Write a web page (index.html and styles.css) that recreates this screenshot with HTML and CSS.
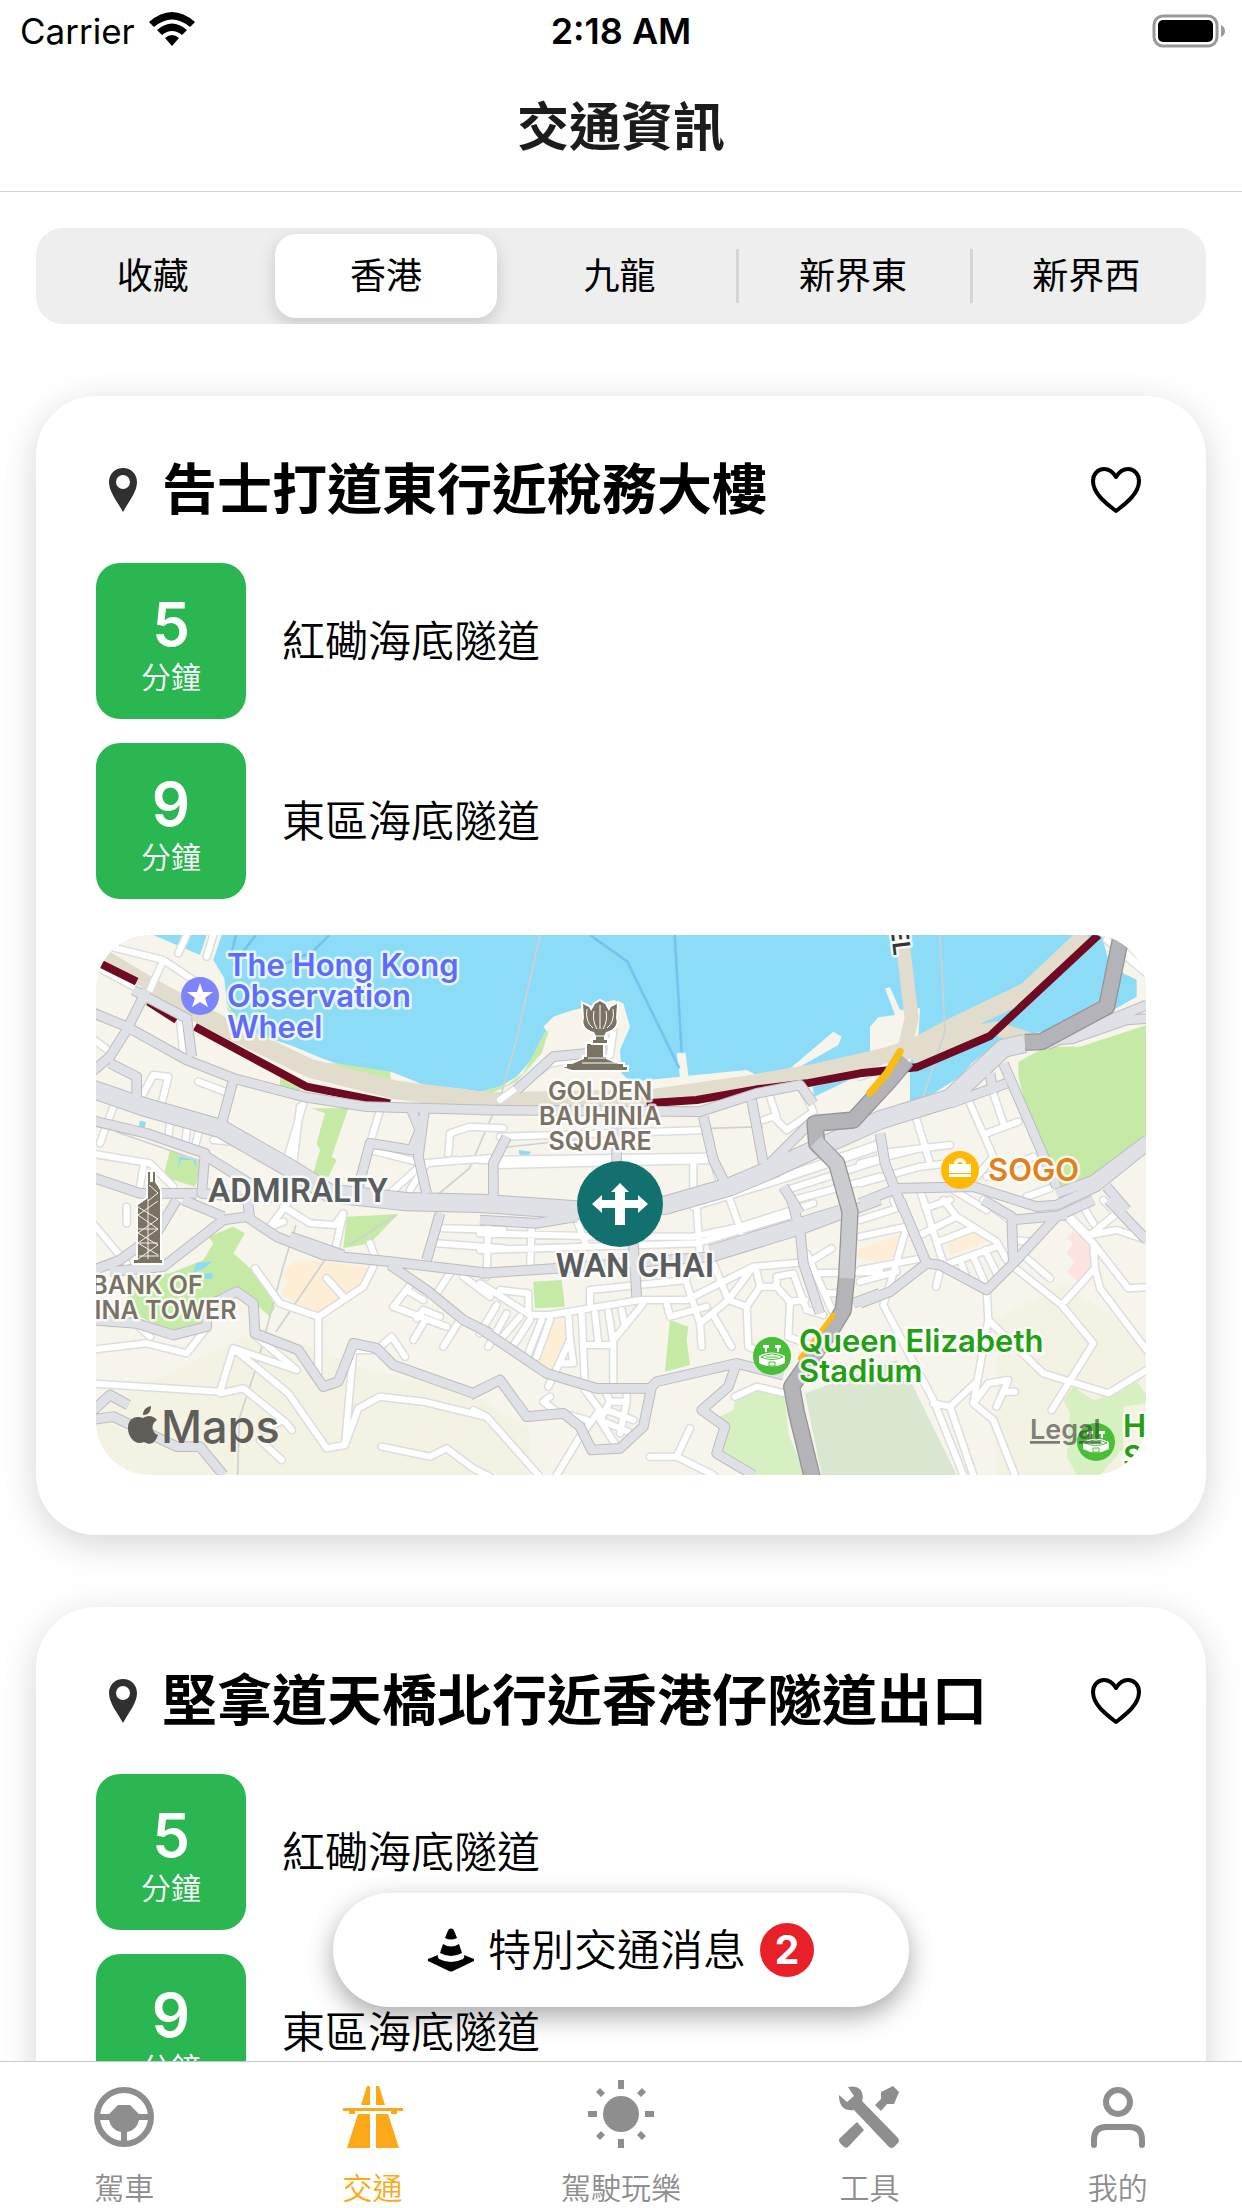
FILE: index.html
```html
<!DOCTYPE html>
<html lang="zh-Hant-HK">
<head>
    <meta charset="utf-8">
    <title>交通資訊</title>
    <meta name="viewport" content="width=device-width, initial-scale=1">
    <link rel="stylesheet" href="styles.css">
</head>
<body>

<header>
    <div class="status">
        <span class="carrier">Carrier
            <svg width="46" height="34" viewBox="0 0 46 34">
                <path d="M23 34l-7-8q7-6 14 0z"/>
                <path d="M8 18q15-13 30 0l-5 5q-10-8-20 0z"/>
                <path d="M0 10q23-20 46 0l-5 5q-18-15-36 0z"/>
            </svg>
        </span>
        <span class="time">2:18 AM</span>
        <span class="battery">
            <svg width="74" height="34" viewBox="0 0 74 34">
                <rect x="2" y="2" width="63" height="30" rx="9" fill="none" stroke="#999" stroke-width="3"/>
                <rect x="6" y="6" width="55" height="22" rx="5"/>
                <path d="M69 11q4 2 4 6t-4 6z" fill="#999"/>
            </svg>
        </span>
    </div>
    <h1>交通資訊</h1>
</header>

<main>
    <fieldset class="segments">
        <label><input type="radio" name="area"><span>收藏</span></label>
        <label><input type="radio" name="area" checked><span>香港</span></label>
        <label><input type="radio" name="area"><span>九龍</span></label>
        <label class="divided"><input type="radio" name="area"><span>新界東</span></label>
        <label class="divided"><input type="radio" name="area"><span>新界西</span></label>
    </fieldset>

    <section class="card">
        <div class="card-head">
            <svg class="pin" width="28" height="44" viewBox="0 0 28 44">
                <path fill-rule="evenodd" d="M14 0C6 0 0 6 0 14c0 10 8 19 14 30 6-11 14-20 14-30C28 6 22 0 14 0zm0 7a7 7 0 1 1 0 14 7 7 0 0 1 0-14z"/>
            </svg>
            <h2>告士打道東行近稅務大樓</h2>
            <button class="heart" aria-label="收藏">
                <svg width="52" height="48" viewBox="0 0 52 48">
                    <path d="M26 45C17 38 3 28 3 15 3 8 8 3 14 3c5 0 9 3 12 8 3-5 7-8 12-8 6 0 11 5 11 12 0 13-14 23-23 30z"/>
                </svg>
            </button>
        </div>
        <ul class="routes">
            <li><div class="minutes"><b>5</b><small>分鐘</small></div><span>紅磡海底隧道</span></li>
            <li><div class="minutes"><b>9</b><small>分鐘</small></div><span>東區海底隧道</span></li>
        </ul>
        <svg class="map" viewBox="0 0 1050 540" preserveAspectRatio="xMidYMid slice">
            <defs>
                <!-- white side streets -->
                <g id="streets">
                    <path transform="translate(-18 -15)" d="M20 110L150 180M60 50L220 90L340 170M220 90L180 180M0 320L60 365M270 270L280 370M155 500L190 435L235 440L215 520M325 455L405 485M70 530L30 640M240 580L235 620M290 600L285 645M325 610L315 650M640 520L590 690M630 530L610 700M370 630L480 640M0 670L180 700L250 770M160 710L150 770M870 540L840 640M840 660L1000 700L1200 685M1075 670L1080 610L1140 590L1240 595M900 790L1000 700M960 780L1010 700L1100 690M290 15L265 70M370 15L350 80"/>
                    <path transform="translate(1152 -15)" d="M60 620L680 600M0 690L690 680M60 705L700 690L720 760M640 690V780M850 570L880 560L920 600L1000 545L960 460M870 500L890 560M60 510L210 400L390 375L400 300M640 830L900 750L1200 650M910 740L1200 640M920 780L1200 690M940 810L1200 740"/>
                    <path transform="translate(2292 -15)" d="M170 570L210 700M60 670L270 645M0 700L200 650M0 760L180 710L270 700M330 520L400 680L350 740M400 490L430 580M380 610L475 575M500 800L570 775M280 780L380 840M180 780L200 840M210 830L270 810M380 740L520 680M0 440L80 410M740 30L860 130M790 60L830 100"/>
                    <path transform="translate(-18 795)" d="M110 20V70M0 60L110 190M600 0L540 80L580 65M580 20L660 70L735 75L760 40L735 150M840 130L860 185M1060 85L1240 90M1040 130L1240 145M850 200L820 260L685 350L570 310L495 205M685 350V520M710 235L760 290M0 450L170 430L290 460L345 390M130 365L180 410M0 550L390 575L430 445L595 580L710 745L765 735L790 450L860 450L905 410L945 470M390 580L460 565L590 670L605 690M430 445L620 510L500 410M765 735L805 625L870 590L1000 605L1185 650M875 740L1020 770L1070 745L1150 805L1200 830M510 720L575 780M570 665L520 690M965 250L910 320L1070 380M1000 330L980 355M1000 370L970 420M1110 360L1060 440M1080 220L1040 280M1120 230L1200 290M1000 330L1050 350M950 270L1000 300"/>
                    <path transform="translate(1152 795)" d="M0 100L400 110L640 110L780 80L1000 10M0 150L650 130L950 40M25 60L20 230M155 75L150 210M290 60L320 140M650 20L660 170M750 0L800 140M0 250L150 345L210 345L480 300L620 300L820 200L990 185L1055 145M60 270L145 280V340M330 310V270L620 240M700 190L745 300L820 200M620 250L660 370L665 440M560 310L570 350L680 320M745 300L800 320L805 440L830 450M745 300L660 370M700 345L755 440M830 215L840 260L890 260V230L940 220L980 330L1030 345M840 260L800 320M890 260L930 305L925 410L980 430M930 305L975 300M980 160L1060 340M1010 220L1200 215M1035 280H1080M50 315L0 400M80 340L25 440M120 350L60 420M150 360L95 445M185 360L145 460M210 360L170 470M265 340L270 420L205 560M305 340L315 560M345 340L355 430M385 335L400 430V555M425 330L435 380M490 310L400 420M315 435H400M270 420L280 490L240 490M210 590L190 605L230 635L320 660M315 570L360 630L315 690M375 570L390 605L360 660L410 740M390 605H440V570M380 630L460 660M360 660L445 695M440 605L420 700M-20 630L20 650L175 825M300 710L230 825M510 770H590L700 825M590 770L630 685M765 590L830 560L915 580"/>
                    <path transform="translate(2292 795)" d="M0 60L110 25L100 0M0 110L140 80L100 220L70 315L220 600L310 825M0 210L185 175M0 245L110 215M190 0L250 190M180 105L290 50L250 0M290 50L410 125L440 180M235 125L340 85M240 200L410 140M240 210L228 260M300 180L320 235M340 170L380 260M375 150L415 230M380 270L385 360L340 610L400 660L465 825M220 610L270 620L345 550M270 620L340 825M340 610L385 550L445 540L410 620M435 575H465M460 200L605 315L700 430L625 550M385 360L550 520L745 580L860 510M625 550L575 630M605 315L705 205L700 130L620 50M705 205L720 265L860 450M700 130L805 265L860 262M690 105L770 90L860 120M690 105L770 40L730 0M670 20L700 70M600 20L690 110M460 120L510 125M495 170L570 235M370 0L450 60"/>
                </g>
                <!-- grey through roads -->
                <g id="roads">
                    <path transform="translate(-18 -15)" d="M0 245L110 290L290 390L430 445L640 500L830 530L1200 540M170 180L110 300L60 380L0 430M290 260L305 380M430 450L395 580M0 570L170 610L345 670L335 790L450 800M960 530L990 600L965 660L840 640L800 790M60 400L140 440V500M1005 530L985 680L1010 790M0 740L150 790L320 790M350 680L560 810M130 180L300 270"/>
                    <path transform="translate(1152 -15)" d="M0 540L660 545L830 490L960 465L1000 520M80 620L40 700V800L0 830M670 560L700 690L750 790M815 510L850 700M870 700L1000 570M910 770L960 850M110 480L220 380L380 365M410 560V700"/>
                    <path transform="translate(2292 -15)" d="M60 610L75 700L130 840M390 430L400 490M430 400L500 560L590 770M270 520L440 460M0 820L110 775L340 770L530 830L590 825L710 770L860 650M590 790L700 750L860 630M740 770L800 840M495 340L640 325L800 270L870 265M560 345L860 225"/>
                    <path transform="translate(-18 795)" d="M0 215L90 180L200 100L260 0M60 215L220 200L400 60L470 50L560 110L700 165L900 185L1200 220M470 -20L480 60M600 110L760 165M900 195L1010 270L1120 360L1200 400M0 360L140 370L250 405L350 380V320L440 275L490 310L495 400L625 450L700 560L745 545L790 430L860 445L910 495L1150 580L1200 555M0 660L70 650L260 740L330 740L400 825M0 640L60 585L115 615M1050 40L1010 180M280 0L400 50"/>
                    <path transform="translate(1152 795)" d="M0 60L170 70L290 50M0 220L230 205L700 170L960 90L1200 0M690 150L1080 30M0 385L200 520L350 565H510L530 545L770 490L910 525M-30 585L60 540L140 650L250 640L300 680L335 750L420 745L490 680L515 560M770 490L745 560L665 630L735 680L710 760L820 825M935 0L960 90L970 190L1020 340M460 130L470 290M1120 310L1200 280"/>
                    <path transform="translate(2292 795)" d="M0 310L90 275L200 190L240 195L380 270L460 190L590 50L700 0M120 0L200 190M460 190L455 50L370 0M455 60L620 45M745 0L860 120"/>
                </g>
                <g id="avenues">
                    <path d="M-18 460L142 515L372 580L582 700L702 775L932 800L1152 805L1440 825L1710 810L1902 755L2022 705L2152 645L2352 555L2562 490L2722 340L2787 325"/>
                </g>
                <g id="expressway">
                    <path d="M3077 -5L3032 215L2837 320L2787 322"/>
                    <path d="M2432 375L2382 435L2272 555L2157 565L2162 625L2222 685L2262 830L2252 1025L2242 1125L2212 1175L2087 1355L2102 1435L2152 1640"/>
                </g>
                <g id="stadium">
                    <circle r="19" fill="#49bf38"/>
                    <path d="M-13 0v7q13 7 26 0V0q-13-7-26 0zM-9-11h6v3h-2v4h-2v-4h-2zM3-11h6v3H7v4H5v-4H3z" fill="#fff"/>
                    <path d="M-11 1q11-6 22 0q-11 5-22 0zM-6 1H6M-3 10V6h6v4z" fill="none" stroke="#49bf38"/>
                </g>
            </defs>

            <rect width="1050" height="540" fill="#f7f4eb"/>
            <g transform="scale(.33333)">
                <path class="hill" d="M500 1180L800 1300L1132 1380L1300 1480L1300 1620H0V1420zM2700 1150L2900 1050L3150 1200V1620H2700z"/>
                <path class="water" d="M377 0L352 75L385 130L392 205L425 260L490 300L582 330L677 370L735 390L890 412L985 450L1105 462L1152 470L1212 455L1262 425L1332 345L1357 295L1342 275L1372 245L1422 228L1552 195L1582 205L1602 275L1572 345L1577 415L1602 440L1752 425L1742 355L1769 353L1777 422L1952 405L1982 420L2077 405L2212 290L2237 305L2227 330L2112 395L2322 360V275L2347 247L2397 240L2367 160L2382 157L2412 225L2472 220L2467 315L2442 385V500L2482 495L2592 425L2627 385L2722 310L2842 290L3012 195L3052 225L3122 185V135L3082 115L3037 75L3017 0zM172 0L312 60L332 0zM2150 455L2270 430L2155 485zM132 557L150 562L145 580L128 575zM675 575L687 580L675 630L667 628zM1268 645L1305 650L1295 665L1270 658z"/>
                <path class="ferry" d="M420 0L405 60M480 0L410 90M700 0L650 50L490 120M1482 0L1594 80L1750 400M1736 0L1757 350"/>
                <path class="park" d="M502 320L572 355L642 385L722 385L882 410L887 455L942 475L832 470L682 415L562 375L502 340zM552 425L622 455L602 475L552 450zM647 520H757L707 665L722 675L697 725L647 730L672 645L662 625L687 535zM222 645L322 685L297 755L202 725zM387 210L412 235L482 305L422 275zM1347 290H1357L1337 355L1262 440L1152 490V470L1232 450L1282 415zM2767 380L2852 335H2952L3152 270V610L2992 730L2892 755L2832 675L2767 425z"/>
                <path class="park" d="M412 875L447 895L412 955L502 1035L537 1115L522 1145L432 1065L332 1125L327 1175L232 1195L132 1145L92 1095L112 1025L222 1015L322 975L352 925L337 905zM752 845L907 837L822 925L742 940zM1312 1040L1397 1035L1407 1115L1317 1120zM1722 1155L1777 1175L1772 1215L1782 1290L1707 1310z"/>
                <path class="park light" d="M1982 1365L2067 1380L2077 1495L2127 1620H1972L1872 1545L1897 1475L1872 1445L1912 1425L1917 1395zM2902 1395L2932 1355L2992 1395L3052 1380L3122 1340L3152 1380V1405L3082 1415V1540L3012 1620H2942L2912 1565L2922 1435z"/>
                <path class="cemetery" d="M2127 1375L2402 1275L2452 1355L2582 1620H2177z"/>
                <path class="sand" d="M602 975L692 980L817 1000L792 1055L672 1140L557 1080L572 1035L557 1015zM1367 1155L1392 1150L1412 1205L1367 1300L1327 1280L1352 1235zM2292 940L2412 900L2392 965L2342 982L2280 965zM2552 925L2632 890L2692 915L2562 960z"/>
                <path class="hospital" d="M2932 890L2987 925L2989 990L2947 1040L2912 1010L2937 980L2912 955L2932 925L2912 910z"/>
                <path class="water" d="M300 985L350 978L325 1000L290 1015zM325 1015H350V1032H325zM250 665L300 675L302 700L290 675L255 675L245 700z"/>

                <path class="tan" d="M12 65L162 155L402 285L642 400L900 465L1180 500L1672 490L1952 450L2152 415L2352 370L2452 340L2562 280L2792 170L2972 0"/>
                <path class="tan thin" d="M2417 0L2447 250L2422 355M2450 375L2650 290L2700 280L2820 320"/>
                <path class="rail" d="M1332 0L1260 320L1215 480L1120 700L1000 800M2532 0L2547 290L2480 490M60 590L320 680M600 870L560 1000L480 1300L430 1450L425 1620M690 970L540 1190M900 840L760 930M1200 640L1700 585L2000 575"/>
                <use href="#streets" class="casing street"/>
                <use href="#streets" class="fill street"/>
                <path class="congested" d="M12 85L122 140M157 200L242 255M297 275L472 370L632 455L782 485L882 505M1652 505L1802 495L1982 463L2132 445L2292 415L2462 397L2682 303L3007 0"/>
                <use href="#roads" class="casing road"/>
                <use href="#avenues" class="casing avenue"/>
                <use href="#roads" class="fill road"/>
                <use href="#avenues" class="fill avenue"/>
                <use href="#expressway" class="casing express"/>
                <use href="#expressway" class="fill express"/>
                <path class="express-light" d="M2160 620L2222 685L2262 830L2252 1030"/>
                <path class="slow" d="M2412 350L2372 415L2322 473"/>
                <path class="slow narrow" d="M2212 1140L2112 1270"/>
            </g>

            <!-- places -->
            <circle cx="104" cy="61" r="19" fill="#7d85fb"/>
            <path fill="#fff" d="M104 48l3 9h10l-8 6 3 9-8-5-8 5 3-9-8-6h10z"/>
            <text class="place violet"><tspan x="131" y="41">The Hong Kong</tspan><tspan x="131" y="72">Observation</tspan><tspan x="131" y="103">Wheel</tspan></text>

            <g class="landmark">
                <path d="M476 135h55v-3h-4v-3h-5l-12-5v-2h-3v-13h-16v13h-3v2l-12 5h-5v3h-4z"/>
                <path d="M497 108h14v-3h-3v-4l2-4c9-2 12-8 10-14l1-14-6 3-2 4-4-7-5-3-5 3-4 7-2-4-6-3 1 14c-2 6 1 12 10 14l2 4v4h-3z"/>
            </g>
            <path d="M504 70v24M498 76q-2 10 3 18M510 76q2 10-3 18M491 74q-2 13 6 19M517 74q2 13-6 19M498 101h12M492 123h20M486 128h34" fill="none" stroke="#fff"/>
            <text class="landmark-name"><tspan x="504" y="165">GOLDEN</tspan><tspan x="504" y="190">BAUHINIA</tspan><tspan x="504" y="215">SQUARE</tspan></text>

            <path class="landmark" d="M38 328h28v-3h-2v-70l-5-8v-10h-2v10h-3v-10h-2v26l-10 7v55h-4z"/>
            <path d="M52 264v60M42 272l20 12-20 14 20 12-20 14M62 266l-20 14 20 14-20 14 20 12M42 294h20M42 308h20M53 250l9 8-10 8M43 321h20" fill="none" stroke="#f7f4eb"/>
            <text class="landmark-name"><tspan x="51" y="359">BANK OF</tspan><tspan x="51" y="384">CHINA TOWER</tspan></text>

            <text class="district" x="202" y="267">ADMIRALTY</text>
            <text class="district" x="539" y="342">WAN CHAI</text>

            <circle cx="864" cy="235" r="19" fill="#ffb900"/>
            <path fill="#fff" d="M853 229h5v-2q6-8 12 0v2h5v9h-22zM861 229h6q-3-5-6 0zM853 239h22v3h-22z"/>
            <text class="place orange" x="892" y="246">SOGO</text>

            <use href="#stadium" x="676" y="421"/>
            <text class="place green"><tspan x="703" y="417">Queen Elizabeth</tspan><tspan x="703" y="447">Stadium</tspan></text>
            <use href="#stadium" x="1000" y="507"/>
            <text class="place green"><tspan x="1027" y="502">H</tspan><tspan x="1027" y="533">S</tspan></text>

            <text class="tunnel" transform="translate(798 21) rotate(83)">TUNNEL</text>

            <circle cx="524" cy="269" r="43" fill="#12706f"/>
            <path fill="#fff" d="M524 248l9 9h-4v8h13v-5l10 9-10 9v-5h-13v17h-10v-17h-13v5l-10-9 10-9v5h13v-8h-4z"/>

            <g class="brand">
                <path d="M47 483c3-2 9-4 14 2-7 4-5 13 1 15-3 8-7 11-14 7-8 4-16-4-16-14 0-9 7-13 15-10zM47 480c0-5 3-8 8-9 0 6-3 9-8 9z"/>
                <text x="65" y="508">Maps</text>
            </g>
            <a href="#legal"><text class="legal" x="934" y="504">Legal</text></a>
        </svg>
    </section>

    <section class="card">
        <div class="card-head">
            <svg class="pin" width="28" height="44" viewBox="0 0 28 44">
                <path fill-rule="evenodd" d="M14 0C6 0 0 6 0 14c0 10 8 19 14 30 6-11 14-20 14-30C28 6 22 0 14 0zm0 7a7 7 0 1 1 0 14 7 7 0 0 1 0-14z"/>
            </svg>
            <h2>堅拿道天橋北行近香港仔隧道出口</h2>
            <button class="heart" aria-label="收藏">
                <svg width="52" height="48" viewBox="0 0 52 48">
                    <path d="M26 45C17 38 3 28 3 15 3 8 8 3 14 3c5 0 9 3 12 8 3-5 7-8 12-8 6 0 11 5 11 12 0 13-14 23-23 30z"/>
                </svg>
            </button>
        </div>
        <ul class="routes">
            <li><div class="minutes"><b>5</b><small>分鐘</small></div><span>紅磡海底隧道</span></li>
            <li><div class="minutes"><b>9</b><small>分鐘</small></div><span>東區海底隧道</span></li>
        </ul>
    </section>
</main>

<div class="bottom">
    <button class="news">
        <svg width="46" height="44" viewBox="0 0 46 44">
            <path d="M21 1q2-1 4 0 1 1 4 9-6 3-12 0 3-8 4-9zM15 16q8 5 16 0l3 9q-11 6-22 0zM10 27q-1 2 1 4 12 6 24 0 2-2 1-4l10 4v2L25 43q-2 1-4 0L0 33v-2z"/>
        </svg>
        <span class="news-title">特別交通消息</span>
        <span class="badge">2</span>
    </button>
    <nav>
        <a href="#drive">
            <svg viewBox="0 0 60 62">
                <circle cx="30" cy="31" r="27" fill="none" stroke="currentColor" stroke-width="6"/>
                <path d="M4 28h11l9-9h12l9 9h11v6H45q-2 10-12 12v12h-6V46q-10-2-12-12H4z"/>
            </svg>
            駕車
        </a>
        <a href="#traffic" class="current">
            <svg viewBox="0 0 60 62">
                <path d="M24 0h3v19h-9zM33 0h3l6 19h-9zM0 22h60v3h-6v3h-6v-3H12v3H6v-3H0zM15 28h12v34H4zM33 28h12l11 34H33z"/>
            </svg>
            交通
        </a>
        <a href="#fun">
            <svg class="tall" viewBox="0 0 66 68">
                <circle cx="33" cy="34" r="18"/>
                <path d="M30 0h6v9h-6zM30 59h6v9h-6zM0 31h9v6H0zM57 31h9v6h-9zM8 12l4-4 5 5-4 4zM49 13l5-5 4 4-5 5zM8 56l5-5 4 4-5 5zM49 55l4-4 5 5-4 4z"/>
            </svg>
            駕駛玩樂
        </a>
        <a href="#tools">
            <svg viewBox="0 0 60 62">
                <path d="M9 1q14-3 15 10l-1 4 36 37q2 3 0 5l-4 4q-2 2-5 0L15 24Q0 26 0 9l8 7 7-6zM42 6l12-6 6 6-5 12h-7l-6 7-6-6 6-6zM18 36l7 8-15 16q-2 3-5 1l-4-4q-2-3 0-5z"/>
            </svg>
            工具
        </a>
        <a href="#me">
            <svg viewBox="0 0 60 62">
                <g fill="none" stroke="currentColor" stroke-width="6" stroke-linecap="round">
                    <circle cx="30" cy="16" r="12"/>
                    <path d="M6 59V54Q6 41 18 41H42Q54 41 54 54V59"/>
                </g>
            </svg>
            我的
        </a>
    </nav>
</div>

</body>
</html>
```
FILE: styles.css
```css
* {
    box-sizing: border-box;
}
body {
    margin: 0;
    height: 100vh;
    display: flex;
    flex-direction: column;
    background: white;
    color: black;
    font-family: Inter, "Noto Sans CJK TC", sans-serif;
}
h1, h2, ul, fieldset {
    margin: 0;
    padding: 0;
    border: 0;
}
button {
    border: 0;
    background: none;
    font-family: inherit;
    color: inherit;
}

/* status bar and title */
header {
    height: 192px;
    flex: none;
    border-bottom: 1px solid #d4d4d4;
}
.status {
    display: grid;
    grid-template-columns: 1fr auto 1fr;
    align-items: center;
    height: 60px;
    padding: 2px 16px 0;
    font-size: 35px;
}
.carrier {
    display: flex;
    align-items: center;
    gap: 14px;
    padding-left: 4px;
}
.carrier svg {
    margin-top: -4px;
}
.time {
    font-size: 36px;
    font-weight: 600;
}
.battery {
    display: flex;
    justify-self: end;
}
h1 {
    line-height: 136px;
    font-size: 52px;
    font-weight: 700;
    text-align: center;
    color: #1c1c1e;
}

main {
    flex: 1;
    min-height: 0;
    overflow-y: auto;
    scrollbar-width: none;
    padding: 36px 36px 72px;
}

/* area switch */
.segments {
    display: grid;
    grid-template-columns: repeat(5, 1fr);
    height: 96px;
    padding-right: 3px;
    border-radius: 27px;
    background: #eee;
    overflow: hidden;
    font-size: 36px;
}
.segments label {
    position: relative;
    display: flex;
    padding: 6px;
}
.segments input {
    position: absolute;
    opacity: 0;
}
.segments span {
    flex: 1;
    border-radius: 21px;
    line-height: 84px;
    text-align: center;
}
.segments input:checked + span {
    background: white;
    box-shadow: 0 6px 18px rgba(0, 0, 0, 0.16);
}
.divided {
    background: linear-gradient(#d4d4d6, #d4d4d6) left center / 3px 54px no-repeat;
}

/* cards */
.card {
    margin-top: 72px;
    padding: 60px;
    border-radius: 60px;
    background: white;
    box-shadow: 0 9px 36px rgba(0, 0, 0, 0.17);
}
.card-head {
    display: flex;
    align-items: center;
    height: 67px;
    margin-bottom: 40px;
    padding: 0 4px 0 13px;
}
.pin {
    fill: #303030;
}
h2 {
    flex: 1;
    padding-left: 25px;
    line-height: 67px;
    font-size: 55px;
    font-weight: 700;
    white-space: nowrap;
}
.heart {
    padding: 0;
    line-height: 0;
}
.heart path {
    fill: none;
    stroke: black;
    stroke-width: 4;
    stroke-linejoin: round;
}
.routes {
    display: grid;
    gap: 24px;
    list-style: none;
}
.routes li {
    display: flex;
    align-items: center;
    gap: 36px;
    font-size: 43px;
    font-weight: 350;
}
.routes span, .news-title {
    padding-bottom: 7px;
}
.minutes {
    display: flex;
    flex-direction: column;
    align-items: center;
    width: 150px;
    height: 156px;
    padding-top: 30px;
    border-radius: 24px;
    background: #2ab651;
    color: white;
}
.minutes b {
    line-height: 62px;
    font-size: 60px;
    font-weight: 600;
}
.minutes small {
    line-height: 44px;
    font-size: 30px;
}

/* map */
.map {
    display: block;
    width: 100%;
    height: 540px;
    margin-top: 36px;
    border-radius: 54px;
}
.water    { fill: #8cdcf7; }
.park     { fill: #c5eaa5; }
.light    { fill: #d7f0c1; }
.cemetery { fill: #d9e6d0; }
.sand     { fill: #fdeed5; }
.hospital { fill: #fce3e0; }
.hill     { fill: #f4f2e3; }

.ferry, .tan, .rail, .congested, .slow, .express-light, .casing, .fill {
    fill: none;
    stroke-linejoin: round;
}
.ferry { stroke: #74c3ee; stroke-width: 8; }
.tan   { stroke: #e1dccb; stroke-width: 56; }
.thin  { stroke-width: 42; }
.rail  { stroke: #cfd0d0; stroke-width: 5; }
.congested { stroke: #6e0a22; stroke-width: 24; }
.slow  { stroke: #f9bd12; stroke-width: 22; stroke-linecap: round; }
.narrow { stroke-width: 14; }
.express-light { stroke: #cbccd0; stroke-width: 44; }

.casing.street  { stroke: #dcdddd; stroke-width: 27; stroke-linecap: round; }
.fill.street    { stroke: #fff;    stroke-width: 18; stroke-linecap: round; }
.casing.road    { stroke: #bbbcc0; stroke-width: 32; }
.fill.road      { stroke: #e0e1e6; stroke-width: 26; }
.casing.avenue  { stroke: #bbbcc0; stroke-width: 58; }
.fill.avenue    { stroke: #e0e1e6; stroke-width: 52; }
.casing.express { stroke: #949499; stroke-width: 52; }
.fill.express   { stroke: #b3b3b8; stroke-width: 44; }

.map text {
    paint-order: stroke;
    stroke: rgba(255, 255, 255, 0.8);
    stroke-width: 5px;
    stroke-linejoin: round;
}
.place {
    font-size: 31px;
    font-weight: 600;
}
.violet { fill: #5e6bfb; }
.orange { fill: #e0811a; }
.green  { fill: #22a012; }
.landmark {
    fill: #7a7263;
    paint-order: stroke;
    stroke: white;
    stroke-width: 4;
}
.landmark-name {
    fill: #7a7263;
    font-size: 25px;
    font-weight: 600;
    text-anchor: middle;
}
.district {
    fill: #595d5d;
    font-family: Roboto, sans-serif;
    font-size: 33px;
    font-weight: 600;
    text-anchor: middle;
}
.tunnel {
    fill: #333;
    font-size: 24px;
    font-weight: 600;
    text-anchor: end;
}
.brand {
    fill: #5f5e5a;
}
.map .brand text {
    font-size: 45px;
    font-weight: 500;
    stroke: none;
}
.map .legal {
    fill: rgba(60, 60, 60, 0.65);
    font-size: 27px;
    font-weight: 600;
    text-decoration: underline;
    stroke: none;
}

/* tab bar with the news button floating above it */
.bottom {
    position: relative;
    flex: none;
    height: 147px;
    border-top: 1px solid #c8c8c8;
    background: white;
}
.news {
    position: absolute;
    left: 50%;
    bottom: 201px;
    display: flex;
    align-items: center;
    justify-content: center;
    gap: 14px;
    width: 576px;
    height: 114px;
    margin-left: -288px;
    border-radius: 57px;
    background: white;
    box-shadow: 0 9px 27px rgba(0, 0, 0, 0.35);
    font-size: 43px;
    font-weight: 350;
    white-space: nowrap;
}
.badge {
    width: 54px;
    border-radius: 50%;
    background: #e92027;
    color: white;
    line-height: 54px;
    font-size: 39px;
    font-weight: 700;
}
nav {
    display: grid;
    grid-template-columns: repeat(5, 1fr);
}
nav a {
    display: flex;
    flex-direction: column;
    align-items: center;
    padding-top: 18px;
    color: #8e8e8e;
    line-height: 38px;
    font-size: 30px;
    font-weight: 350;
    text-decoration: none;
}
nav svg {
    height: 74px;
    margin-bottom: 15px;
    padding: 6px 0;
    fill: currentColor;
}
nav .tall {
    padding: 0 0 6px;
}
nav .current {
    color: #fba919;
}
```
